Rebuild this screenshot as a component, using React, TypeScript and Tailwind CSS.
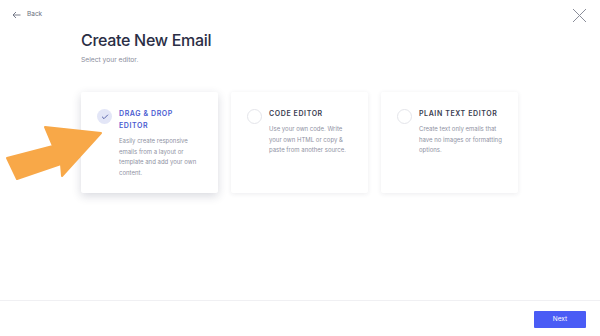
import { Check } from 'lucide-react';

const editors = [
    { title: ['DRAG & DROP', 'EDITOR'], text: 'Easily create responsive emails from a layout or template and add your own content.', active: true },
    { title: ['CODE EDITOR'], text: 'Use your own code. Write your own HTML or copy & paste from another source.', active: false },
    { title: ['PLAIN TEXT EDITOR'], text: 'Create text only emails that have no images or formatting options.', active: false },
];

function Arrow() {
    return (
        <svg className="absolute left-0 top-0 pointer-events-none" width="120" height="200" viewBox="0 0 120 200">
            <polygon
                points="101,133 45,127 53,146 7,158 17,179 61,164 62,176"
                fill="#f8a848"
                stroke="#f8a848"
                strokeWidth="2"
                strokeLinejoin="round"
            />
        </svg>
    );
}

export default function App() {
    return (
        <div className="relative w-[600px] h-[336px] bg-white flex flex-col overflow-hidden" style={{ fontFamily: 'Inter, "Noto Sans", sans-serif' }}>
            <div className="flex items-start justify-between h-[30px] pl-[12px] pr-[13px] pt-[8px]">
                <div className="flex items-center gap-[6px] mt-[2px] text-[6.5px] text-[#6b6f80]">
                    <svg width="9" height="8" viewBox="0 0 9 8" fill="none" stroke="#6b6f80" strokeWidth="0.9">
                        <path d="M8.5 4H1M4 1L1 4l3 3" />
                    </svg>
                    <span>Back</span>
                </div>
                <svg width="15" height="15" viewBox="0 0 15 15" stroke="#8a8d99" strokeWidth="1">
                    <path d="M1 1l13 13M14 1L1 14" />
                </svg>
            </div>

            <main className="flex-1 pl-[81px]">
                <h1 className="text-[16px] leading-[20px] font-medium text-[#2a2e45] tracking-[-0.3px]">Create New Email</h1>
                <p className="mt-[6px] text-[6.7px] leading-[9px] text-[#8a8d9c]">Select your editor.</p>

                <div className="mt-[27px] flex gap-[13px]">
                    {editors.map((e) => (
                        <div
                            key={e.title[0]}
                            className={`w-[137px] h-[101px] bg-white rounded-[2px] flex gap-[7px] pl-[16px] pr-[14px] pt-[16px] ${e.active ? 'shadow-[0_3px_10px_rgba(40,45,80,0.18)]' : 'shadow-[0_1px_5px_rgba(40,45,80,0.09)]'}`}
                        >
                            {e.active ? (
                                <div className="w-[15px] h-[15px] mt-[1px] shrink-0 rounded-full bg-[#e3e6f7] flex items-center justify-center">
                                    <Check size={8} strokeWidth={2.5} color="#3e4a9a" />
                                </div>
                            ) : (
                                <div className="w-[15px] h-[15px] mt-[1px] shrink-0 rounded-full border-[1.5px] border-[#e4e5ea]" />
                            )}
                            <div>
                                <div className={`text-[7px] leading-[12px] font-semibold tracking-[0.6px] ${e.active ? 'text-[#4a5bd1]' : 'text-[#3a3d50]'}`}>
                                    {e.title.map((t) => <div key={t}>{t}</div>)}
                                </div>
                                <p className="mt-[4px] text-[6px] leading-[10.7px] text-[#8f92a3]">{e.text}</p>
                            </div>
                        </div>
                    ))}
                </div>
            </main>

            <footer className="h-[36px] border-t border-[#f0f0f3] flex items-center justify-end pr-[14px]">
                <button className="w-[52px] h-[17px] bg-[#4a5cf5] rounded-[1px] text-white text-[6.5px] mt-[2px]">Next</button>
            </footer>

            <Arrow />
        </div>
    );
}
